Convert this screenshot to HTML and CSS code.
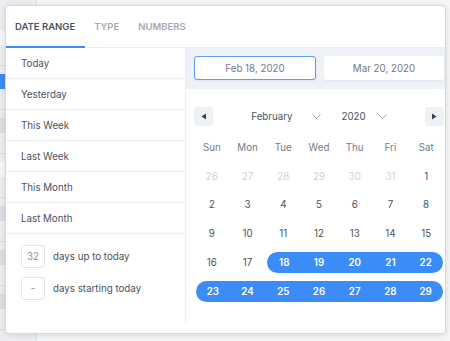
FILE: index.html
```html
<!DOCTYPE html>
<html lang="en">
<head>
    <meta charset="UTF-8">
    <meta name="viewport" content="width=device-width, initial-scale=1.0">
    <title>Date range picker</title>
    <link rel="stylesheet" href="styles.css">
</head>
<body>

    <div class="page">
        <div class="side">
            <div class="side-row"><span class="chip"></span></div>
            <div class="side-row"><span class="chip active"></span></div>
            <div class="side-row"><span class="chip grey"></span></div>
            <div class="side-row"><span class="chip"></span></div>
            <div class="side-row"><span class="chip grey"></span></div>
            <div class="side-row"><span class="chip grey"></span></div>
            <div class="side-row"><span class="chip grey"></span></div>
        </div>
    </div>

    <div class="popup">
        <div class="tabs">
            <div class="tab active">Date Range</div>
            <div class="tab">Type</div>
            <div class="tab">Numbers</div>
        </div>

        <div class="body">
            <div class="presets">
                <div class="preset">Today</div>
                <div class="preset">Yesterday</div>
                <div class="preset">This Week</div>
                <div class="preset">Last Week</div>
                <div class="preset">This Month</div>
                <div class="preset">Last Month</div>
                <div class="custom">
                    <div class="custom-row"><span class="num-box">32</span> days up to today</div>
                    <div class="custom-row"><span class="num-box">-</span> days starting today</div>
                </div>
            </div>

            <div class="cal-side">
                <div class="range-inputs">
                    <div class="date-input focused">Feb 18, 2020</div>
                    <div class="date-input">Mar 20, 2020</div>
                </div>

                <div class="cal">
                    <div class="nav">
                        <button class="nav-btn">
                            <svg width="6" height="7" viewBox="0 0 6 7"><path d="M5 0.5 L0.5 3.5 L5 6.5 Z" fill="#3a4150"/></svg>
                        </button>
                        <div class="selects">
                            <span class="select month">February
                                <svg width="9" height="5" viewBox="0 0 9 5"><path d="M0.5 0.5 L4.5 4.5 L8.5 0.5" fill="none" stroke="#9aa1ab" stroke-width="1"/></svg>
                            </span>
                            <span class="select">2020
                                <svg width="9" height="5" viewBox="0 0 9 5"><path d="M0.5 0.5 L4.5 4.5 L8.5 0.5" fill="none" stroke="#9aa1ab" stroke-width="1"/></svg>
                            </span>
                        </div>
                        <button class="nav-btn">
                            <svg width="6" height="7" viewBox="0 0 6 7"><path d="M1 0.5 L5.5 3.5 L1 6.5 Z" fill="#3a4150"/></svg>
                        </button>
                    </div>

                    <div class="grid">
                        <div class="wd">Sun</div><div class="wd">Mon</div><div class="wd">Tue</div><div class="wd">Wed</div><div class="wd">Thu</div><div class="wd">Fri</div><div class="wd">Sat</div>

                        <div class="day out">26</div><div class="day out">27</div><div class="day out">28</div><div class="day out">29</div><div class="day out">30</div><div class="day out">31</div><div class="day">1</div>
                        <div class="day">2</div><div class="day">3</div><div class="day">4</div><div class="day">5</div><div class="day">6</div><div class="day">7</div><div class="day">8</div>
                        <div class="day">9</div><div class="day">10</div><div class="day">11</div><div class="day">12</div><div class="day">13</div><div class="day">14</div><div class="day">15</div>
                        <div class="day">16</div><div class="day">17</div><div class="day sel start">18</div><div class="day sel">19</div><div class="day sel">20</div><div class="day sel">21</div><div class="day sel end">22</div>
                        <div class="day sel start">23</div><div class="day sel">24</div><div class="day sel">25</div><div class="day sel">26</div><div class="day sel">27</div><div class="day sel">28</div><div class="day sel end">29</div>
                    </div>
                </div>
            </div>
        </div>
    </div>

</body>
</html>
```

FILE: styles.css
```css
* {
    box-sizing: border-box;
}
body {
    margin: 0;
    font-family: Inter, "Noto Sans", sans-serif;
    background: #f5f6f8;
    color: #4a5160;
}

/* page behind the popup */
.page {
    height: 341px;
}
.side {
    width: 37px;
    height: 100%;
    border-right: 1px solid #dfe2e6;
    background: #eceef1;
    padding-top: 22px;
}
.side-row {
    height: 44px;
    border-bottom: 1px solid #d9dce1;
    padding-top: 8px;
}
.chip {
    display: block;
    width: 14px;
    height: 15px;
    background: #f7f8fa;
}
.chip.active {
    background: #3c8cf7;
}
.chip.grey {
    background: #dcdfe3;
}

/* popup */
.popup {
    position: absolute;
    left: 5px;
    top: 5px;
    width: 441px;
    height: 329px;
    background: white;
    border: 1px solid #d6d9de;
    border-radius: 4px;
    box-shadow: 0 1px 6px rgba(0, 0, 0, 0.12);
    padding-bottom: 10px;
    display: flex;
    flex-direction: column;
}
.tabs {
    display: flex;
    height: 42px;
    border-bottom: 1px solid #eceef1;
}
.tab {
    padding: 0 10px 0 9px;
    font-size: 9.5px;
    font-weight: 600;
    text-transform: uppercase;
    color: #a3a9b2;
    display: flex;
    align-items: center;
    border-bottom: 2px solid transparent;
    margin-bottom: -1px;
}
.tab.active {
    color: #4a5160;
    border-bottom-color: #3c8cf7;
}

.body {
    flex: 1;
    display: flex;
}
.presets {
    width: 180px;
    border-right: 1px solid #eceef1;
}
.preset {
    height: 31px;
    padding-left: 15px;
    font-size: 9.75px;
    display: flex;
    align-items: center;
    border-bottom: 1px solid #eceef1;
}
.custom {
    padding: 11px 0 0 15px;
}
.custom-row {
    display: flex;
    align-items: center;
    gap: 8px;
    font-size: 9.75px;
    margin-bottom: 9px;
}
.num-box {
    width: 24px;
    height: 23px;
    border: 1px solid #e2e5e9;
    border-radius: 3px;
    display: flex;
    align-items: center;
    justify-content: center;
    color: #8a919b;
}

.cal-side {
    flex: 1;
}
.range-inputs {
    background: #eef1f5;
    padding: 8px 1px 9px 8px;
    display: flex;
    gap: 8px;
}
.date-input {
    flex: 1;
    height: 24px;
    background: white;
    border-radius: 3px;
    font-size: 9.75px;
    color: #737a85;
    display: flex;
    align-items: center;
    justify-content: center;
    box-shadow: 0 1px 2px rgba(0, 0, 0, 0.06);
}
.date-input.focused {
    border: 1px solid #5b9cf5;
}

.cal {
    padding: 18px 1px 0 8px;
}
.nav {
    display: flex;
    align-items: center;
    justify-content: space-between;
    height: 19px;
}
.nav-btn {
    width: 19px;
    height: 19px;
    border: none;
    border-radius: 3px;
    background: #eef1f5;
    padding: 0;
    display: flex;
    align-items: center;
    justify-content: center;
}
.selects {
    display: flex;
    gap: 21px;
    font-size: 9.75px;
    color: #4a5160;
}
.select {
    display: flex;
    align-items: center;
    gap: 12px;
}
.select.month {
    gap: 19px;
}

.grid {
    display: grid;
    grid-template-columns: repeat(7, 1fr);
    grid-auto-rows: 28.75px;
    margin-top: 7px;
    font-size: 9.75px;
}
.wd, .day {
    display: flex;
    align-items: center;
    justify-content: center;
}
.wd {
    color: #737a85;
}
.day.out {
    color: #cdd2d9;
}
.day.sel {
    background: #3c8cf7;
    color: white;
    font-weight: 600;
    margin: 4px 0;
}
.day.start {
    border-radius: 11px 0 0 11px;
    margin-left: 2px;
}
.day.end {
    border-radius: 0 11px 11px 0;
    margin-right: 1px;
}
```
